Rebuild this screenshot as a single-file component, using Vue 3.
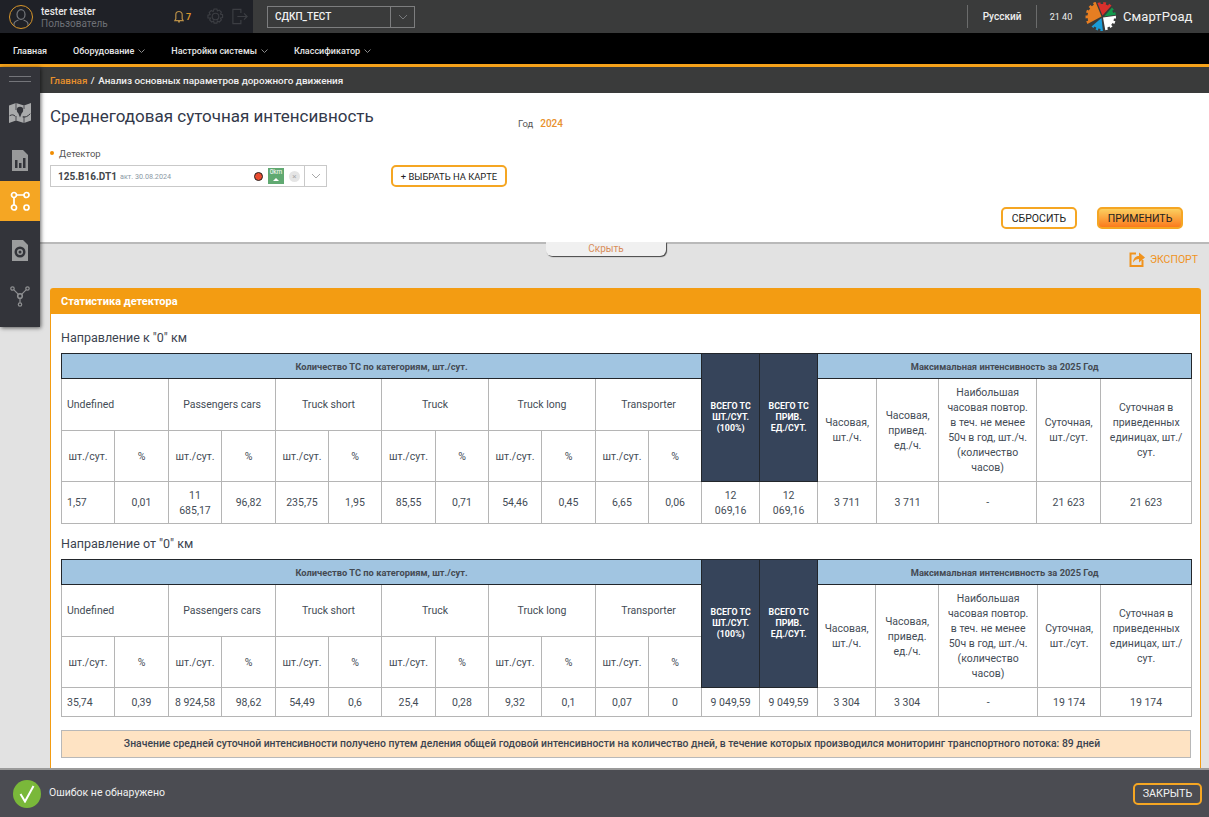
<script setup>
const cats = ['Undefined', 'Passengers cars', 'Truck short', 'Truck', 'Truck long', 'Transporter']
const tables = [
  {
    title: 'Направление к "0" км',
    cols: [53, 54, 53, 54, 53, 53, 54, 53, 53, 54, 53, 53, 58, 58, 59, 62, 98, 64, 91],
    values: ['1,57', '0,01', '11 685,17', '96,82', '235,75', '1,95', '85,55', '0,71', '54,46', '0,45', '6,65', '0,06'],
    total: ['12 069,16', '12 069,16'],
    max: ['3 711', '3 711', '-', '21 623', '21 623'],
    bodyClass: 'row-tall'
  },
  {
    title: 'Направление от "0" км',
    cols: [53, 54, 53, 54, 53, 53, 54, 53, 53, 54, 53, 53, 58, 58, 58, 63, 99, 63, 91],
    values: ['35,74', '0,39', '8 924,58', '98,62', '54,49', '0,6', '25,4', '0,28', '9,32', '0,1', '0,07', '0'],
    total: ['9 049,59', '9 049,59'],
    max: ['3 304', '3 304', '-', '19 174', '19 174'],
    bodyClass: 'row-short'
  }
]
const menu = [
  { label: 'Главная', arrow: false },
  { label: 'Оборудование', arrow: true },
  { label: 'Настройки системы', arrow: true },
  { label: 'Классификатор', arrow: true }
]

// Jagged pie wedge for the logo: the outer arc is stepped into teeth.
function wedge(cx, cy, r, from, to, teeth) {
  const pt = (rad, deg) => {
    const a = (deg * Math.PI) / 180
    return (cx + rad * Math.cos(a)).toFixed(1) + ' ' + (cy + rad * Math.sin(a)).toFixed(1)
  }
  const step = (to - from) / (teeth * 2 - 1)
  let d = 'M' + cx + ' ' + cy
  for (let i = 0; i < teeth * 2 - 1; i++) {
    const rad = i % 2 === 0 ? r : r - 2
    d += 'L' + pt(rad, from + i * step) + 'L' + pt(rad, from + (i + 1) * step)
  }
  return d + 'Z'
}
const petals = [
  { fill: '#e67e22', d: wedge(16.5, 14.5, 16, 152, 248, 5) },
  { fill: '#d9302c', d: wedge(17.5, 13.5, 13.5, 248, 312, 3) },
  { fill: '#12984b', d: wedge(19, 14.5, 12, 312, 352, 2) },
  { fill: '#ffffff', d: wedge(18, 15.5, 13, -8, 80, 4) },
  { fill: '#1a9dd9', d: wedge(16.5, 16, 13, 84, 140, 3) }
]
</script>

<template>
  <div class="page">
    <header class="top">
      <div class="user">
        <div class="avatar">
          <svg width="16" height="18" viewBox="0 0 16 18" fill="none" stroke="#77797d" stroke-width="1.2">
            <ellipse cx="8" cy="5.5" rx="4" ry="4.8" />
            <path d="M1 17.5v-2.5c0-2.500 3-3.500 4.500-4M15 17.500v-2.500c0-2.500-3-3.500-4.500-4" />
          </svg>
        </div>
        <div class="user-text">
          <div class="user-name">tester tester</div>
          <div class="user-role">Пользователь</div>
        </div>
        <div class="bell">
          <svg width="10" height="13" viewBox="0 0 11 14" fill="none" stroke="#b98f47" stroke-width="1.300">
            <path d="M1 11.500h9l-1-2V5a3.500 3.500 0 0 0-7 0v4.500zM4.500 13h2" />
          </svg>
          <span>7</span>
        </div>
        <svg class="gear" width="17" height="17" viewBox="0 0 18 18" fill="none" stroke="#3c3e43" stroke-width="1.200">
          <path d="M7.500 1h3l.5 2.200 2-1 2.200 2.200-1 2 2.300.6v3l-2.300.6 1 2-2.200 2.200-2-1-.5 2.200h-3l-.5-2.200-2 1-2.200-2.200 1-2L1 10.500v-3l2.300-.6-1-2 2.200-2.200 2 1z" />
          <circle cx="9" cy="9" r="3.500" />
        </svg>
        <svg width="16" height="17" viewBox="0 0 18 18" fill="none" stroke="#3c3e43" stroke-width="1.300">
          <path d="M10 5V1H1v16h9v-4M6 9h11M13.500 5.500 17 9l-3.500 3.500" />
        </svg>
      </div>
      <div class="top-right">
        <div class="org-select">
          <span class="org-name">СДКП_ТЕСТ</span>
          <span class="org-arrow">
            <svg width="10" height="6" viewBox="0 0 10 6" fill="none" stroke="#77797c"><path d="m1 1 4 4 4-4" /></svg>
          </span>
        </div>
        <div class="spacer"></div>
        <div class="lang">Русский</div>
        <div class="clock">21 40</div>
        <svg class="logo" width="32" height="30" viewBox="0 0 32 30">
          <path v-for="p in petals" :key="p.fill" :fill="p.fill" :d="p.d" />
        </svg>
        <div class="brand">СмартРоад</div>
      </div>
    </header>

    <nav class="nav">
      <div v-for="m in menu" :key="m.label" class="nav-item">
        {{ m.label }}
        <svg v-if="m.arrow" width="7" height="4" viewBox="0 0 7 4" fill="none" stroke="#8b8b8b"><path d="m.5.5 3 3 3-3" /></svg>
      </div>
    </nav>

    <div class="crumbs">
      <span class="crumb-home">Главная</span>
      <span class="crumb-sep">/</span>
      <span>Анализ основных параметров дорожного движения</span>
    </div>

    <main class="main">
      <aside class="side">
        <div class="burger"><i></i><i></i></div>
        <div class="side-item item-map">
          <svg width="22" height="22" viewBox="0 0 22 22">
            <path fill="#a9aaab" d="M0 3.500 7 1l8 2.500L22 1v17.500L15 21l-8-2.500L0 21z" />
            <path fill="none" stroke="#33343a" stroke-width=".8" d="M7 1v7M7 14v4.500M15 3.500V7M15 14v7" />
            <circle cx="11" cy="8" r="3.200" fill="#33343a" />
            <path fill="#33343a" d="M8.800 10h4.400L11 15.500z" />
            <path fill="none" stroke="#33343a" stroke-width="1" stroke-linecap="round" d="M1 13.500c2-1 3.500-1 5 .5M14 15c2.500 .5 4.500-.5 7-3" />
          </svg>
        </div>
        <div class="side-item item-chart">
          <svg width="16" height="21" viewBox="0 0 16 21">
            <path fill="#98999a" d="M0 0h11l5 5v16H0z" />
            <path fill="#33343a" d="M3 10h2.500v8H3zM7 13h2.500v5H7zM11 8h2.500v10H11z" />
          </svg>
        </div>
        <div class="side-item active">
          <svg width="20" height="20" viewBox="0 0 20 20" fill="none" stroke="#fff" stroke-width="1.700">
            <circle cx="4" cy="4" r="2.500" /><circle cx="16.500" cy="4" r="2.500" />
            <circle cx="4" cy="16.500" r="2.500" /><circle cx="16.500" cy="16.500" r="2.500" />
            <path d="M6.500 4H14M4 6.500V14" />
          </svg>
        </div>
        <div class="side-item item-sim">
          <svg width="16" height="21" viewBox="0 0 16 21">
            <path fill="#9b9c9d" d="M0 0h11l5 5v16H0z" />
            <circle cx="8" cy="12" r="5.500" fill="#33343a" />
            <circle cx="8" cy="12" r="3" fill="#9b9c9d" />
            <circle cx="8" cy="12" r="1.500" fill="#33343a" />
          </svg>
        </div>
        <div class="side-item item-net">
          <svg width="20" height="21" viewBox="0 0 20 21" fill="none" stroke="#8e8f91" stroke-width="1.200">
            <circle cx="2.500" cy="2.500" r="1.700" /><circle cx="17.500" cy="2.500" r="1.700" />
            <circle cx="10" cy="10" r="2.300" stroke-width="1.600" /><circle cx="10" cy="18.500" r="1.700" />
            <path d="m3.700 3.700 4.700 4.700M16.300 3.700l-4.700 4.700M10 12.300v4.500" />
          </svg>
        </div>
      </aside>

      <section class="filter">
        <div class="filter-head">
          <h1 class="title">Среднегодовая суточная интенсивность</h1>
          <div class="year"><span class="year-label">Год</span><span class="year-value">2024</span></div>
        </div>
        <div class="field-label"><i class="dot"></i>Детектор</div>
        <div class="field-row">
          <div class="detector">
            <div class="detector-main">
              <b>125.B16.DT1</b><small>акт. 30.08.2024</small>
              <span class="status"></span>
              <span class="km">0km<i></i></span>
              <span class="clear">×</span>
            </div>
            <span class="detector-arrow">
              <svg width="10" height="6" viewBox="0 0 10 6" fill="none" stroke="#a8a8a8"><path d="m1 1 4 4 4-4" /></svg>
            </span>
          </div>
          <button class="btn btn-map">+ ВЫБРАТЬ НА КАРТЕ</button>
        </div>
        <div class="filter-actions">
          <button class="btn btn-reset">СБРОСИТЬ</button>
          <button class="btn btn-apply">ПРИМЕНИТЬ</button>
        </div>
      </section>

      <div class="hide-row"><div class="hide-tab">Скрыть</div></div>

      <div class="export">
        <svg width="16" height="16" viewBox="0 0 16 16">
          <path fill="none" stroke="#f0931e" stroke-width="2" d="M7 2.500H1.500v12.500h12V9" />
          <path fill="#f0931e" d="M4 11.500c.3-4 2.500-6.500 6-6.500V1.500L16 6.500 10 11.500V8c-2.500 0-4.500 1-6 3.500z" />
        </svg>
        ЭКСПОРТ
      </div>

      <section class="panel">
        <div class="panel-head">Статистика детектора</div>
        <div class="panel-body">
          <template v-for="t in tables" :key="t.title">
            <h2 class="dir">{{ t.title }}</h2>
            <table class="stats">
              <colgroup>
                <col v-for="(w, i) in t.cols" :key="i" :style="{ width: w + 'px' }" />
              </colgroup>
              <tbody>
                <tr class="r1">
                  <th colspan="12" class="blue">Количество ТС по категориям, шт./сут.</th>
                  <th rowspan="3" class="dark">ВСЕГО ТС<br />ШТ./СУТ.<br />(100%)</th>
                  <th rowspan="3" class="dark">ВСЕГО ТС<br />ПРИВ.<br />ЕД./СУТ.</th>
                  <th colspan="5" class="blue">Максимальная интенсивность за 2025 Год</th>
                </tr>
                <tr class="r2">
                  <td v-for="(c, i) in cats" :key="c" colspan="2" :class="{ left: i === 0 }">{{ c }}</td>
                  <td rowspan="2">Часовая, шт./ч.</td>
                  <td rowspan="2">Часовая, привед. ед./ч.</td>
                  <td rowspan="2" class="wide">Наибольшая часовая повтор. в теч. не менее 50ч в год, шт./ч. (количество часов)</td>
                  <td rowspan="2">Суточная, шт./сут.</td>
                  <td rowspan="2" class="wide">Суточная в приведенных единицах, шт./сут.</td>
                </tr>
                <tr class="r3">
                  <template v-for="c in cats" :key="c">
                    <td>шт./сут.</td>
                    <td>%</td>
                  </template>
                </tr>
                <tr :class="t.bodyClass">
                  <td v-for="(v, i) in t.values" :key="i" :class="{ left: i === 0 }">{{ v }}</td>
                  <td v-for="(v, i) in t.total" :key="'t' + i" class="wide">{{ v }}</td>
                  <td v-for="(v, i) in t.max" :key="'m' + i">{{ v }}</td>
                </tr>
              </tbody>
            </table>
          </template>
          <div class="note">Значение средней суточной интенсивности получено путем деления общей годовой интенсивности на количество дней, в течение которых производился мониторинг транспортного потока: 89 дней</div>
        </div>
      </section>
    </main>

    <footer class="foot">
      <div class="ok">
        <svg width="18" height="18" viewBox="0 0 18 18" fill="none" stroke="#fff" stroke-width="2"><path d="m2.500 9 4.500 7.500L15.500 1" /></svg>
      </div>
      <span class="foot-text">Ошибок не обнаружено</span>
      <button class="btn btn-close">ЗАКРЫТЬ</button>
    </footer>
  </div>
</template>

<style>
html, body { margin: 0; padding: 0; overflow: hidden; }
</style>

<style scoped>
* { box-sizing: border-box; }
.page { position: relative; width: 1209px; height: 817px; overflow: hidden; background: #e2e2e2; font-family: Roboto, "Liberation Sans", sans-serif; color: #3b4350; display: flex; flex-direction: column; }

.top { height: 33px; flex: none; display: flex; background: #3a3b3b; }
.user { width: 253px; flex: none; background: #1f2127; display: flex; align-items: center; padding-left: 9px; }
.avatar { width: 24px; height: 24px; border: 1px solid #d8962a; border-radius: 50%; display: flex; align-items: center; justify-content: center; overflow: hidden; padding-top: 2px; }
.user-text { margin-left: 8px; width: 133px; flex: none; line-height: 12px; margin-top: 3px; }
.user-name { font-size: 10px; font-weight: 500; color: #e8e8e8; }
.user-role { font-size: 10px; color: #6d7076; }
.bell { display: flex; align-items: center; gap: 2px; width: 33px; font-size: 9px; font-weight: 700; color: #d9932b; }
.gear { margin-right: 8px; }
.top-right { flex: 1; display: flex; align-items: center; padding-left: 14px; }
.org-select { width: 148px; height: 22px; border: 1px solid #7d7e7f; display: flex; align-items: center; color: #f2f2f2; font-size: 10px; font-weight: 500; }
.org-name { flex: 1; padding-left: 7px; }
.org-arrow { width: 24px; height: 100%; border-left: 1px solid #7d7e7f; display: flex; align-items: center; justify-content: center; }
.spacer { flex: 1; }
.lang { height: 23px; width: 70px; border-left: 1px solid #6b6c6c; border-right: 1px solid #6b6c6c; display: flex; align-items: center; justify-content: center; font-size: 10px; font-weight: 500; color: #eee; }
.clock { width: 48px; text-align: center; font-size: 9px; color: #eee; }
.logo { flex: none; margin-right: 6px; }
.brand { width: 86px; font-size: 13px; color: #f1f1f1; letter-spacing: .1px; }

.nav { height: 34px; flex: none; background: #000; border-bottom: 3px solid #f5a21b; display: flex; align-items: center; padding-left: 13px; padding-top: 4px; }
.nav-item { font-size: 9px; font-weight: 500; color: #e6e6e6; display: flex; align-items: center; gap: 4px; margin-right: 26px; white-space: nowrap; }
.crumbs { height: 26px; flex: none; background: #3a3b3b; color: #efefef; font-size: 9.900px; font-weight: 500; display: flex; align-items: center; padding-left: 50px; }
.crumb-home { color: #e8912c; }
.crumb-sep { margin: 0 3.500px; }

.main { position: relative; flex: 1; min-height: 0; display: flex; flex-direction: column; }
.side { position: absolute; left: 0; top: -26px; width: 40px; height: 260px; background: #33343a; box-shadow: 1px 1px 4px rgba(0, 0, 0, .6); z-index: 3; }
.burger { height: 26px; display: flex; flex-direction: column; gap: 4px; align-items: center; justify-content: center; padding-bottom: 2px; }
.burger i { display: block; width: 22px; height: 1px; background: #74757a; }
.side-item { display: flex; align-items: center; justify-content: center; }
.item-map { height: 40px; }
.item-chart { height: 48px; padding-top: 6px; }
.side-item.active { background: #f5a623; height: 40px; }
.item-sim { height: 54px; padding-top: 4px; }
.item-net { height: 42px; }

.filter { height: 149px; flex: none; margin-left: 40px; background: #fff; padding: 12px 10px 0 10px; position: relative; }
.filter-head { display: flex; height: 33px; }
.title { margin: 0; width: 468px; font-size: 17px; font-weight: 400; line-height: 22px; color: #33394a; white-space: nowrap; }
.year { font-size: 9.500px; margin-top: 13px; color: #555; display: flex; gap: 7px; }
.year-value { color: #e8912c; font-size: 10px; font-weight: 500; }
.field-label { margin-top: 9px; font-size: 9.500px; color: #555; display: flex; align-items: center; gap: 5px; height: 12px; }
.dot { width: 4px; height: 4px; border-radius: 50%; background: #f08c00; }
.field-row { margin-top: 6px; display: flex; align-items: flex-start; }
.detector { width: 277px; height: 22px; border: 1px solid #c9c9c9; display: flex; align-items: center; }
.detector-main { flex: 1; display: flex; align-items: center; padding-left: 7px; height: 100%; }
.detector-main b { font-size: 10px; font-weight: 700; color: #44474c; }
.detector-main small { font-size: 7.200px; color: #8a99a5; margin-left: 3px; flex: 1; white-space: nowrap; }
.status { width: 9px; height: 9px; border-radius: 50%; background: #ea4b2f; border: 1px solid #222; margin-right: 5px; }
.km { width: 16px; height: 16px; margin-top: -1px; background: #60a971; color: #fff; font-size: 6.500px; line-height: 9px; text-align: center; display: flex; flex-direction: column; align-items: center; margin-right: 5px; }
.km i { width: 0; height: 0; border-left: 3px solid transparent; border-right: 3px solid transparent; border-bottom: 3px solid #fff; margin-top: 1px; }
.clear { width: 11px; height: 11px; border-radius: 50%; background: #e5e5e5; color: #aaa; font-size: 8px; line-height: 11px; text-align: center; margin-right: 4px; }
.detector-arrow { width: 22px; height: 100%; border-left: 1px solid #c9c9c9; display: flex; align-items: center; justify-content: center; }
.btn { font-family: inherit; background: #fff; border: 2px solid #f5a623; border-radius: 5px; color: #222; padding: 0; cursor: pointer; }
.btn-map { width: 116px; height: 22px; margin-left: 64px; font-size: 9.400px; }
.filter-actions { position: absolute; right: 26px; top: 114px; display: flex; gap: 20px; }
.btn-reset { width: 76px; height: 22px; font-size: 10.500px; }
.btn-apply { width: 86px; height: 22px; font-size: 10.500px; background: linear-gradient(#fbcf60, #fb7a1d); border-color: #f5a623; }

.hide-row { height: 2px; flex: none; background: #b9b9b9; display: flex; justify-content: center; }
.hide-tab { width: 120px; height: 14px; margin-left: 3px; flex: none; background: #f0f0f0; border-radius: 0 0 6px 6px; box-shadow: 1px 1px 1px #444; font-size: 10px; color: #d98d5a; text-align: center; line-height: 14px; z-index: 2; }

.export { height: 44px; flex: none; display: flex; align-items: center; justify-content: flex-end; padding: 0 11px 14px 0; gap: 5px; color: #f0931e; font-size: 10.500px; }

.panel { margin: 0 8px 0 50px; flex: none; background: #fff; border-radius: 3px 3px 0 0; }
.panel-head { height: 26px; background: #f39c12; color: #fff; font-size: 11px; font-weight: 700; line-height: 27px; padding-left: 11px; border-radius: 3px 3px 0 0; }
.panel-body { border: 1px solid #f39c12; border-top: 0; padding: 4px 9px 30px 10px; }
.dir { margin: 0; height: 35px; padding-top: 12px; font-size: 12.500px; font-weight: 400; line-height: 15px; color: #3d4450; white-space: nowrap; }
.stats { width: 1130px; table-layout: fixed; border-collapse: collapse; font-size: 10.500px; line-height: 15px; color: #444c56; text-align: center; }
.stats th, .stats td { border: 1px solid #b5b5b5; padding: 0 5px; font-weight: 400; overflow-wrap: break-word; }
.stats td.left { text-align: left; padding-left: 5px; }
.stats td.wide { padding: 0 7px; }
.stats .blue { background: #a1c5e1; border: 1px solid #22262b; font-size: 9.300px; font-weight: 700; color: #444a52; }
.stats .dark { background: #36445a; border: 1px solid #22262b; color: #fff; font-size: 8.800px; font-weight: 700; line-height: 11px; padding: 0 6px; }
.r1 { height: 25px; }
.r2 { height: 52px; }
.r3 { height: 51px; }
.row-tall { height: 42px; }
.row-short { height: 29px; }
.note { margin-top: 13px; height: 28px; padding-right: 28px; background: #fee3c3; border: 1px solid #b8b8b8; font-size: 10.400px; font-weight: 500; color: #3b4350; text-align: center; line-height: 26px; white-space: nowrap; }

.foot { position: absolute; left: 0; right: 0; bottom: 0; height: 49px; background: #4b4c52; border-top: 2px solid #9a9a9a; display: flex; align-items: center; padding: 0 7px 0 13px; z-index: 4; }
.ok { width: 28px; height: 28px; border-radius: 50%; background: #7ab83a; display: flex; align-items: center; justify-content: center; }
.foot-text { flex: 1; margin-left: 8px; margin-bottom: 2px; font-size: 10.500px; color: #f0f0f0; }
.btn-close { width: 69px; height: 22px; background: transparent; color: #f1f1f1; font-size: 10.800px; }
</style>
